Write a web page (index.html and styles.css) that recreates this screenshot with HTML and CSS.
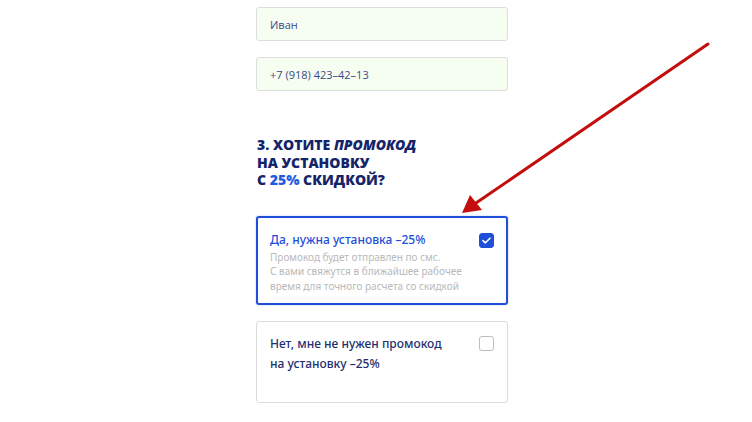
FILE: index.html
```html
<!DOCTYPE html>
<html lang="ru">
<head>
    <meta charset="UTF-8">
    <title>Промокод</title>
    <link rel="stylesheet" href="styles.css">
</head>
<body>
    <div class="page">
        <div class="form">
            <div class="field">Иван</div>
            <div class="field">+7 (918) 423–42–13</div>

            <h2 class="question">3. Хотите <em>промокод</em><br>на установку<br>с <span class="accent">25%</span> скидкой?</h2>

            <label class="option option-active">
                <span class="option-text">
                    <span class="option-title">Да, нужна установка –25%</span>
                    <span class="option-note">Промокод будет отправлен по смс.<br>С вами свяжутся в ближайшее рабочее<br>время для точного расчета со скидкой</span>
                </span>
                <span class="check check-on">
                    <svg width="9" height="7" viewBox="0 0 9 7"><path d="M1 3.6 L3.4 5.8 L8 1.2" fill="none" stroke="#fff" stroke-width="1.6" stroke-linecap="round" stroke-linejoin="round"/></svg>
                </span>
            </label>

            <label class="option">
                <span class="option-text">
                    <span class="option-title option-title-dark">Нет, мне не нужен промокод<br>на установку –25%</span>
                </span>
                <span class="check"></span>
            </label>
        </div>

        <!-- pointer arrow drawn over the page -->
        <svg class="arrow" width="752" height="422" viewBox="0 0 752 422">
            <line x1="708" y1="44" x2="476" y2="203" stroke="#c40d0d" stroke-width="3" stroke-linecap="round"/>
            <polygon points="462,213 470,195 482,210" fill="#c40d0d"/>
        </svg>
    </div>
</body>
</html>
```

FILE: styles.css
```css
body {
    margin: 0;
    padding: 0;
    background-color: #ffffff;
    font-family: "Open Sans", Arial, sans-serif;
}
.page {
    position: relative;
    width: 752px;
    height: 422px;
    overflow: hidden;
}
.form {
    width: 252px;
    margin-left: 256px;
    padding-top: 7px;
    display: flex;
    flex-direction: column;
}
.field {
    box-sizing: border-box;
    height: 34px;
    margin-bottom: 16px;
    padding: 0 13px;
    display: flex;
    align-items: center;
    background-color: #f6fef1;
    border: 1px solid #dedede;
    border-radius: 3px;
    font-size: 11px;
    color: #3a4887;
}
.question {
    margin: 29px 0 27px 1px;
    font-family: "Open Sans", Arial, sans-serif;
    font-size: 14px;
    font-weight: 800;
    line-height: 17.5px;
    text-transform: uppercase;
    color: #142469;
}
.question em {
    font-style: italic;
}
.accent {
    color: #1f5be0;
}
.option {
    box-sizing: border-box;
    display: flex;
    justify-content: space-between;
    align-items: flex-start;
    border: 1px solid #dcdcdc;
    border-radius: 3px;
    padding: 12px 13px 12px 13px;
    margin-bottom: 16px;
    height: 82px;
}
.option-active {
    border: 2px solid #1f4fd8;
    padding: 13px 12px 11px 12px;
    height: 89px;
    box-shadow: 0 0 2px rgba(31, 79, 216, 0.35);
}
.option-text {
    display: flex;
    flex-direction: column;
    font-family: "Noto Sans", Arial, sans-serif;
}
.option-title {
    font-size: 12px;
    font-weight: 500;
    line-height: 18px;
    color: #1f4fd8;
}
.option-title-dark {
    color: #23306e;
    line-height: 20px;
}
.option-note {
    margin-top: 1px;
    font-size: 10px;
    line-height: 14.5px;
    color: #b9b9b9;
}
.check {
    box-sizing: border-box;
    flex: none;
    width: 15px;
    height: 15px;
    margin-top: 2px;
    border: 1px solid #bdbdbd;
    border-radius: 3px;
    display: flex;
    align-items: center;
    justify-content: center;
}
.check-on {
    background-color: #1f4fd8;
    border-color: #1f4fd8;
}
.arrow {
    position: absolute;
    top: 0;
    left: 0;
    pointer-events: none;
}
```
